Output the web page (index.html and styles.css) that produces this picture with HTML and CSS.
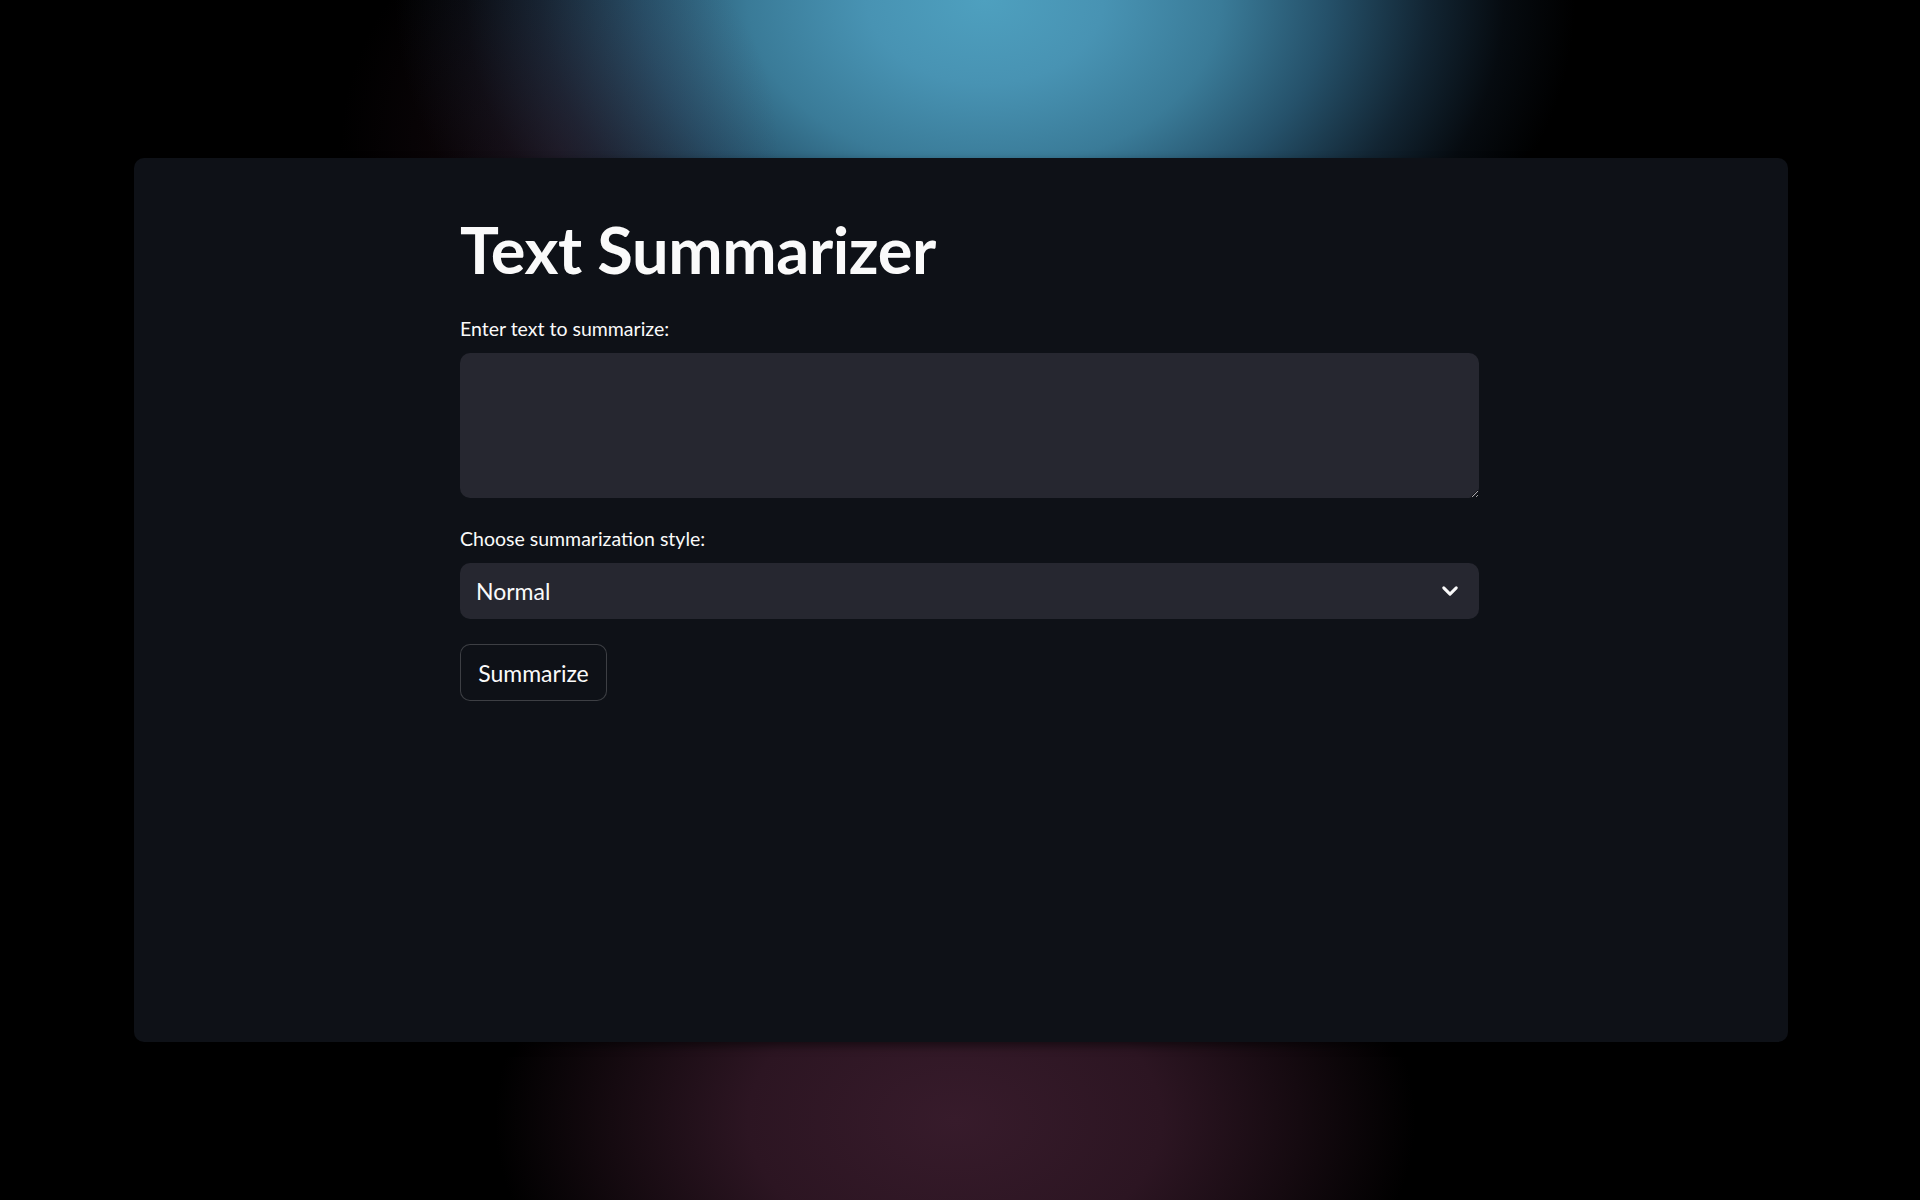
FILE: index.html
```html
<!DOCTYPE html>
<html lang="en">
<head>
<meta charset="utf-8">
<title>Text Summarizer</title>
<link rel="stylesheet" href="styles.css">
</head>
<body>
<div class="stage">
  <main class="panel">
    <div class="content">
      <h1 class="title">Text Summarizer</h1>
      <div class="field field-text">
        <label class="label" for="src">Enter text to summarize:</label>
        <textarea class="textarea" id="src"></textarea>
      </div>
      <div class="field field-select">
        <label class="label">Choose summarization style:</label>
        <div class="select">
          <span class="select-value">Normal</span>
          <svg class="chevron" width="16" height="16" viewBox="0 0 16 16" aria-hidden="true">
            <path d="M3 5.5 L8 10.5 L13 5.5" fill="none" stroke="#fafafa" stroke-width="2.4" stroke-linecap="round" stroke-linejoin="round"/>
          </svg>
        </div>
      </div>
      <button class="btn" type="button">Summarize</button>
    </div>
  </main>
</div>
</body>
</html>
```

FILE: styles.css
```css
html, body {
  margin: 0;
  padding: 0;
}

body {
  width: 1920px;
  height: 1200px;
  overflow: hidden;
  font-family: "Lato", "Noto Sans", "Liberation Sans", sans-serif;
  color: #fafafa;
  background-color: #000;
  background-image:
    radial-gradient(ellipse 220px 240px at 560px 150px, rgba(70, 30, 50, 0.3), rgba(0, 0, 0, 0) 100%),
    radial-gradient(ellipse 590px 420px at 985px 0px, #4ea0bf 0%, #4893b3 20%, #3a7b98 40%, #25516a 58%, #122533 75%, #060b10 88%, rgba(0, 0, 0, 0) 100%),
    radial-gradient(ellipse 460px 300px at 955px 1120px, #371b2b 0%, #2c1522 45%, #150a10 75%, rgba(0, 0, 0, 0) 100%);
}

.stage {
  padding: 158px 132px 0 134px;
}

.panel {
  height: 884px;
  background: #0e1117;
  border-radius: 10px;
  box-sizing: border-box;
  padding: 52px 0 0 326px;
  box-shadow: 0 4px 10px rgba(0, 0, 0, 0.5);
}

.content {
  width: 1019px;
  display: flex;
  flex-direction: column;
  align-items: flex-start;
}

.title {
  margin: 0 0 25px;
  font-size: 65px;
  line-height: 1.2;
  font-weight: 700;
  color: #fafafa;
  letter-spacing: -0.4px;
}

.field {
  width: 100%;
  display: flex;
  flex-direction: column;
}

.field-text {
  margin-bottom: 25px;
}

.field-select {
  margin-bottom: 25px;
}

.label {
  font-size: 19.5px;
  line-height: 32px;
  color: #fafafa;
  margin-bottom: 8px;
}

.textarea {
  display: block;
  box-sizing: border-box;
  width: 100%;
  height: 145px;
  margin: 0;
  border: none;
  border-radius: 10px;
  background: #262730;
  color: #fafafa;
  font-family: inherit;
  font-size: 24px;
  padding: 14px 16px;
  outline: none;
  color-scheme: dark;
  resize: vertical;
}

.select {
  box-sizing: border-box;
  width: 100%;
  height: 56px;
  border-radius: 10px;
  background: #262730;
  display: flex;
  align-items: center;
  justify-content: space-between;
  padding: 0 19px 0 16px;
}

.select-value {
  font-size: 23px;
  color: #fafafa;
}

.chevron {
  width: 20px;
  height: 20px;
}

.btn {
  box-sizing: border-box;
  width: 147px;
  height: 57px;
  margin: 0;
  padding: 0;
  border: 1px solid rgba(250, 250, 250, 0.2);
  border-radius: 10px;
  background: #0e1117;
  color: #fafafa;
  font-family: inherit;
  font-size: 23px;
  cursor: pointer;
}
```
